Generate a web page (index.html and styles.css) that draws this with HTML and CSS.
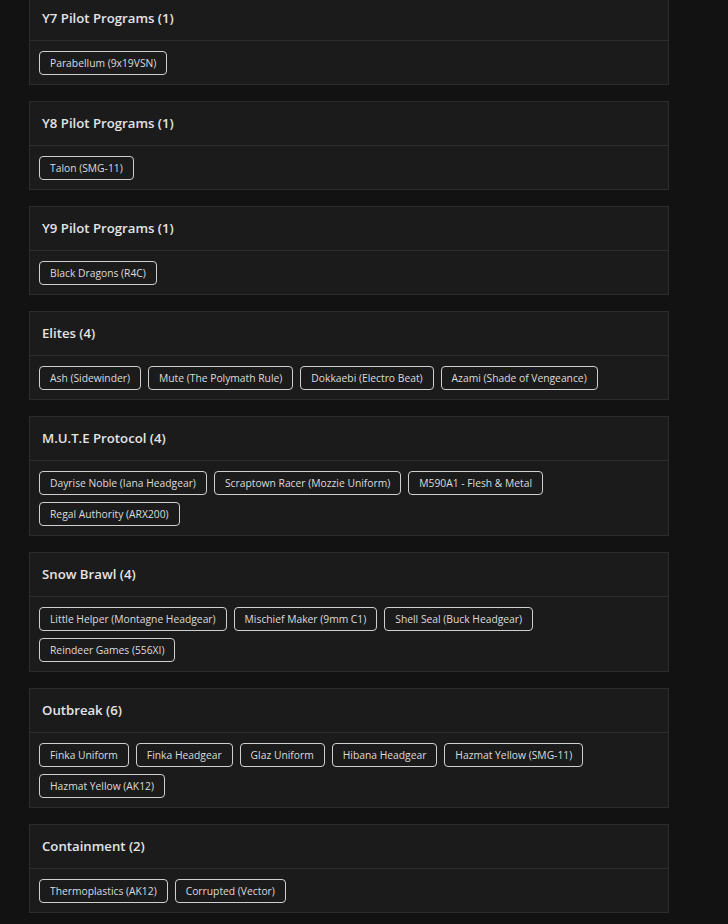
FILE: index.html
```html
<!DOCTYPE html>
<html lang="en">
<head>
    <meta charset="UTF-8">
    <meta name="viewport" content="width=device-width, initial-scale=1.0">
    <title>Bundles</title>
    <link rel="stylesheet" href="styles.css">
</head>
<body>

    <div class="container">
        <div class="card">
            <div class="card-header">Y7 Pilot Programs (1)</div>
            <div class="card-body">
                <span class="chip">Parabellum (9x19VSN)</span>
            </div>
        </div>

        <div class="card">
            <div class="card-header">Y8 Pilot Programs (1)</div>
            <div class="card-body">
                <span class="chip">Talon (SMG-11)</span>
            </div>
        </div>

        <div class="card">
            <div class="card-header">Y9 Pilot Programs (1)</div>
            <div class="card-body">
                <span class="chip">Black Dragons (R4C)</span>
            </div>
        </div>

        <div class="card">
            <div class="card-header">Elites (4)</div>
            <div class="card-body">
                <span class="chip">Ash (Sidewinder)</span>
                <span class="chip">Mute (The Polymath Rule)</span>
                <span class="chip">Dokkaebi (Electro Beat)</span>
                <span class="chip">Azami (Shade of Vengeance)</span>
            </div>
        </div>

        <div class="card">
            <div class="card-header">M.U.T.E Protocol (4)</div>
            <div class="card-body">
                <span class="chip">Dayrise Noble (Iana Headgear)</span>
                <span class="chip">Scraptown Racer (Mozzie Uniform)</span>
                <span class="chip">M590A1 - Flesh &amp; Metal</span>
                <span class="chip">Regal Authority (ARX200)</span>
            </div>
        </div>

        <div class="card">
            <div class="card-header">Snow Brawl (4)</div>
            <div class="card-body">
                <span class="chip">Little Helper (Montagne Headgear)</span>
                <span class="chip">Mischief Maker (9mm C1)</span>
                <span class="chip">Shell Seal (Buck Headgear)</span>
                <span class="chip">Reindeer Games (556XI)</span>
            </div>
        </div>

        <div class="card">
            <div class="card-header">Outbreak (6)</div>
            <div class="card-body">
                <span class="chip">Finka Uniform</span>
                <span class="chip">Finka Headgear</span>
                <span class="chip">Glaz Uniform</span>
                <span class="chip">Hibana Headgear</span>
                <span class="chip">Hazmat Yellow (SMG-11)</span>
                <span class="chip">Hazmat Yellow (AK12)</span>
            </div>
        </div>

        <div class="card">
            <div class="card-header">Containment (2)</div>
            <div class="card-body">
                <span class="chip">Thermoplastics (AK12)</span>
                <span class="chip">Corrupted (Vector)</span>
            </div>
        </div>
    </div>

</body>
</html>
```

FILE: styles.css
```css
body {
    font-family: "Open Sans", Arial, sans-serif;
    background: #121212;
    color: #e6e6e6;
    margin: 0;
    padding: 0;
}
.container {
    width: 640px;
    margin: -4px 0 0 29px;
    display: flex;
    flex-direction: column;
    gap: 16px;
}
.card {
    background: #1b1b1b;
    border: 1px solid #2c2c2c;
}
.card-header {
    height: 43px;
    line-height: 43px;
    padding: 0 12px;
    font-size: 13.2px;
    font-weight: 600;
    color: #e4e4e4;
    border-bottom: 1px solid #2e2e2e;
}
.card-body {
    display: flex;
    flex-wrap: wrap;
    gap: 7px;
    padding: 10px 9px 9px;
}
.chip {
    display: inline-block;
    height: 22px;
    line-height: 22px;
    padding: 0 10px;
    font-size: 10.3px;
    color: #dcdcdc;
    border: 1px solid #cfcfcf;
    border-radius: 4px;
}
```
